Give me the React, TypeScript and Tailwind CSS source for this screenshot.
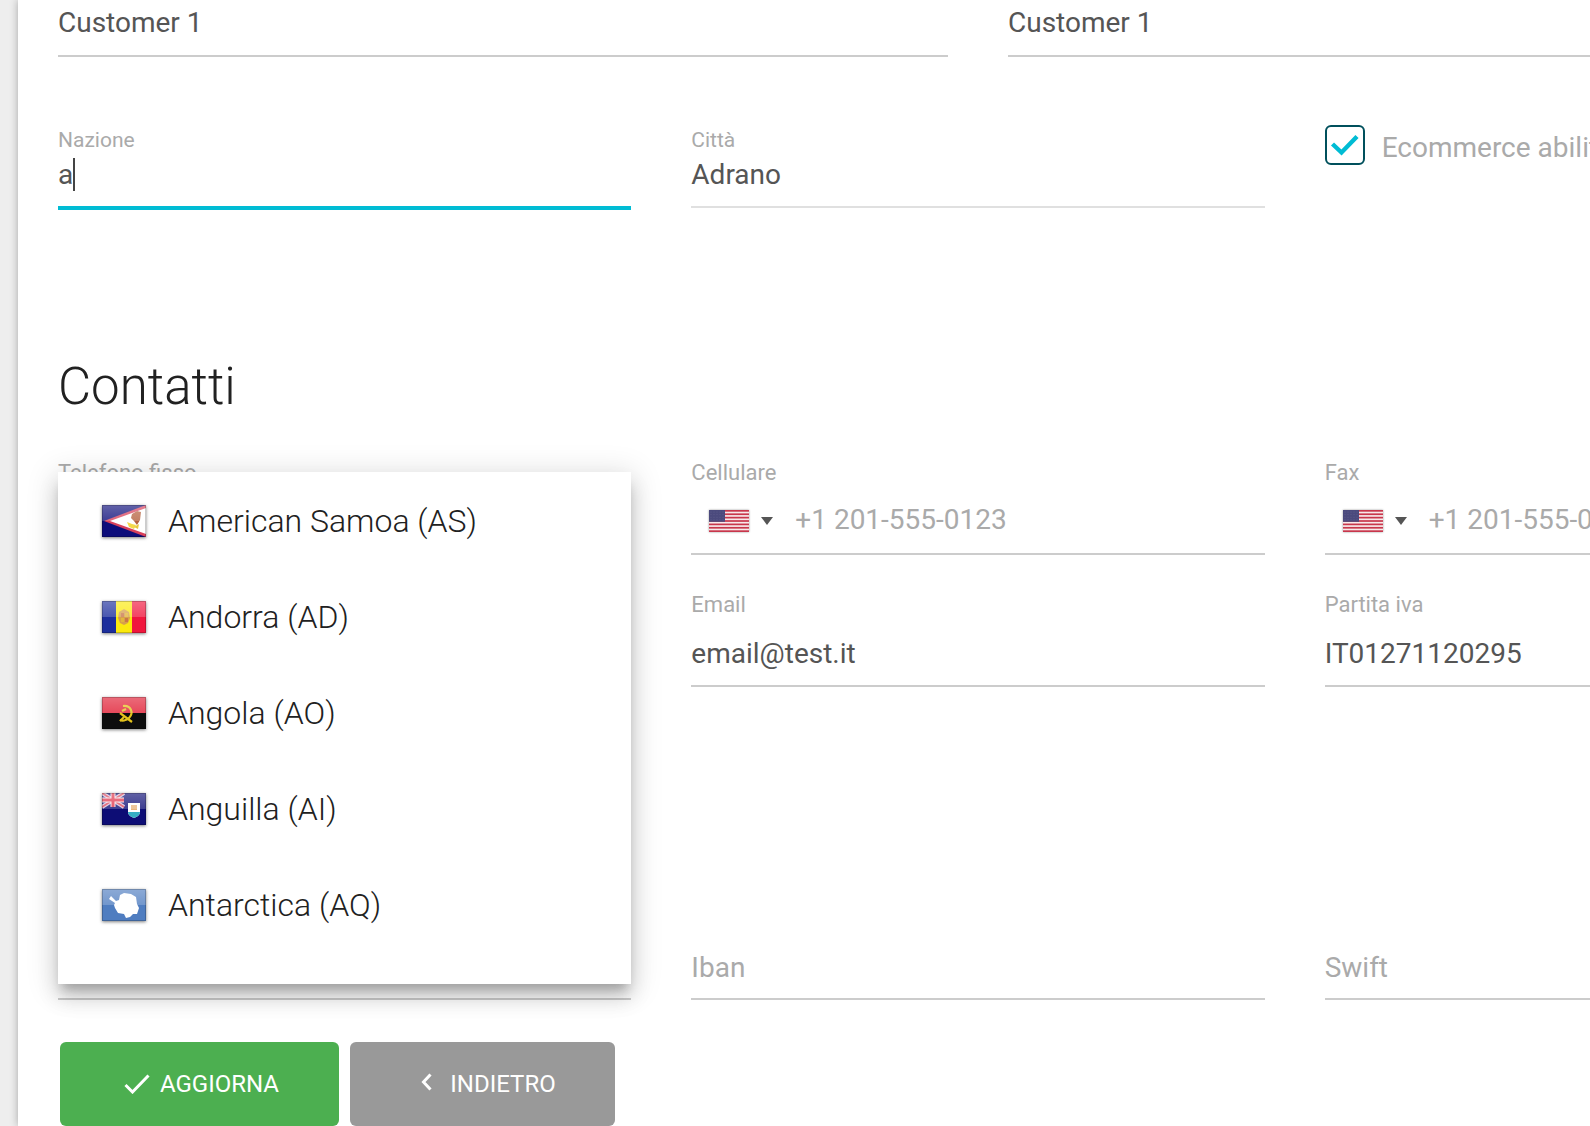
import React from 'react';

type Variant = 'plain' | 'compact' | 'floating' | 'empty';

interface FieldProps {
  id: string;
  variant: Variant;
  label?: string;
  value?: string;
  placeholder?: string;
}

const inputStyles: Record<Variant, string> = {
  plain: 'h-[57px] pb-[10px] border-[#ccc]',
  compact: 'h-14 pb-[10px] border-[#e0e0e0]',
  floating: 'h-[57px] pb-2 border-[#ccc]',
  empty: 'h-[57px] pb-[6px] border-[#ccc]'
};

const compactLabel = 'block text-[21px] leading-[23px] text-[#aaa]';
const floatingLabel = 'block text-[22px] leading-[23px] text-[#aaa] mb-[14px]';

function Field({ id, variant, label, value, placeholder }: FieldProps) {
  return (
    <div>
      {label && (
        <label htmlFor={id} className={variant === 'compact' ? compactLabel : floatingLabel}>
          {label}
        </label>
      )}
      <input
        id={id}
        type="text"
        defaultValue={value}
        placeholder={placeholder}
        aria-label={label ? undefined : placeholder || id}
        className={`block w-full border-b-2 bg-transparent text-[28px] text-[#555] placeholder-[#aaa] outline-none ${inputStyles[variant]}`}
      />
    </div>
  );
}

function UsFlag() {
  return (
    <svg className="w-10 h-[22px] shadow-[0_0_2px_#999]" viewBox="0 0 40 22" preserveAspectRatio="none">
      <rect width="40" height="22" fill="#f7e9ea" />
      {[0, 1, 2, 3, 4, 5, 6].map(i => (
        <rect key={i} y={i * 3.385} width="40" height="1.7" fill="#c8374c" />
      ))}
      <rect width="16" height="11.8" fill="#4b4a7d" />
      {[0, 1, 2, 3].map(row =>
        [0, 1, 2, 3, 4].map(col => (
          <circle key={`${row}-${col}`} cx={2 + col * 3} cy={2 + row * 2.6} r="0.4" fill="#7877a2" />
        ))
      )}
    </svg>
  );
}

function PhoneField({ id, label }: { id: string; label: string }) {
  return (
    <div>
      <label htmlFor={id} className={floatingLabel}>{label}</label>
      <div className="flex h-[57px] border-b-2 border-[#ccc] pb-3">
        <button type="button" aria-label="Prefisso" className="flex items-center gap-3 pl-[18px] pr-[22px] pt-[2px]">
          <UsFlag />
          <svg className="w-3 h-2" viewBox="0 0 12 8">
            <path d="M0 0h12L6 8z" fill="#555" />
          </svg>
        </button>
        <input
          id={id}
          type="tel"
          placeholder="+1 201-555-0123"
          className="min-w-0 flex-1 bg-transparent text-[28px] text-[#555] placeholder-[#aaa] outline-none"
        />
      </div>
    </div>
  );
}

function FlagArt({ code }: { code: string }) {
  switch (code) {
    case 'AS':
      return (
        <>
          <rect width="44" height="32" fill="#10107a" />
          <path d="M44 0v32L2 16z" fill="#d8405a" />
          <path d="M44 3v26L8 16z" fill="#fff" />
          <path d="M30 9l5-3 4 1-1 8-3 5-3-4-3-3z" fill="#b5603c" />
          <path d="M25 17l5 2 4 1-2 4-5-2z" fill="#f3d94a" />
          <path d="M32 22l5-3-1 5z" fill="#e8c83c" />
        </>
      );
    case 'AD':
      return (
        <>
          <rect width="15" height="32" fill="#1a2d9c" />
          <rect x="14" width="16" height="32" fill="#fbe90e" />
          <rect x="30" width="14" height="32" fill="#f0123c" />
          <path d="M17 11l5-3 5 3 1 6-2 5-4 2-4-2-2-5z" fill="#d6a04c" />
          <path d="M19 12h3v4h-3zM23 17h3v4h-3z" fill="#c9764a" />
          <path d="M23 12h3v4h-3zM19 17h3v4h-3z" fill="#e2b53e" />
        </>
      );
    case 'AO':
      return (
        <>
          <rect width="44" height="16" fill="#e01f30" />
          <rect y="16" width="44" height="16" fill="#0b0b0b" />
          <g fill="none" stroke="#e3c21c" strokeWidth="2.2">
            <path d="M21 9c8-1 11 7 6 12-3 3-7 3-9 2" />
            <path d="M18 16l12 9" />
            <path d="M20 14l4-2" />
            <path d="M18 24l4-4" />
          </g>
        </>
      );
    case 'AI':
      return (
        <>
          <rect width="44" height="32" fill="#0c0c74" />
          <path d="M0 0l22 14M22 0L0 14" stroke="#d9c3dc" strokeWidth="4" />
          <path d="M0 0l22 14M22 0L0 14" stroke="#dd4458" strokeWidth="1.6" />
          <path d="M11 0v14M0 7h22" stroke="#f6e6ea" strokeWidth="5" />
          <path d="M11 0v14M0 7h22" stroke="#e03048" strokeWidth="3" />
          <path d="M26 10h12v9c0 3-3 5-6 6-3-1-6-3-6-6z" fill="#fff" />
          <path d="M26 19h12c0 3-3 5-6 6-3-1-6-3-6-6z" fill="#35aec4" />
          <path d="M29 12h6v5h-6z" fill="#e9b67e" />
        </>
      );
    default:
      return (
        <>
          <rect width="44" height="32" fill="#4f7dc0" />
          <path
            d="M9 7L14 12L17 11L18 6L22 4L29 5L34 8L35 15L37 19L35 25L31 25L28 28L24 29L22 25L16 24L13 19L12 16L13 14L7 10Z"
            fill="#fff"
          />
        </>
      );
  }
}

function CountryFlag({ code }: { code: string }) {
  return (
    <svg className="w-11 h-8 shadow-[0_1px_3px_rgba(0,0,0,0.5)]" viewBox="0 0 44 32">
      <defs>
        <linearGradient id={`gloss-${code}`} x1="0" y1="0" x2="0" y2="1">
          <stop offset="0" stopColor="#fff" stopOpacity="0.35" />
          <stop offset="1" stopColor="#fff" stopOpacity="0.2" />
        </linearGradient>
        <filter id={`soft-${code}`} x="0" y="0" width="1" height="1">
          <feGaussianBlur stdDeviation="0.7" />
        </filter>
      </defs>
      <g filter={`url(#soft-${code})`}>
        <FlagArt code={code} />
      </g>
      <rect width="44" height="16" fill={`url(#gloss-${code})`} />
      <rect x="0.5" y="0.5" width="43" height="31" fill="none" stroke="#000" strokeOpacity="0.2" />
    </svg>
  );
}

const countries = [
  { name: 'American Samoa', code: 'AS' },
  { name: 'Andorra', code: 'AD' },
  { name: 'Angola', code: 'AO' },
  { name: 'Anguilla', code: 'AI' },
  { name: 'Antarctica', code: 'AQ' }
];

function CountryMenu() {
  return (
    <ul
      role="listbox"
      aria-label="Nazione"
      className="absolute inset-x-0 top-[11px] z-10 bg-white pb-8 shadow-[0_10px_10px_-4px_rgba(0,0,0,0.2),0_14px_20px_rgba(0,0,0,0.14),0_4px_28px_4px_rgba(0,0,0,0.12)]"
    >
      {countries.map(country => (
        <li
          key={country.code}
          role="option"
          aria-selected={false}
          className="flex h-24 items-center gap-[22px] pl-11 pt-[2px] text-[32px] font-light text-[#212121]"
        >
          <CountryFlag code={country.code} />
          <span>{country.name} ({country.code})</span>
        </li>
      ))}
    </ul>
  );
}

export default function App() {
  const [query, setQuery] = React.useState('a');
  const [ecommerce, setEcommerce] = React.useState(true);

  return (
    <div className="min-h-screen overflow-hidden bg-[#eee] pl-[18px] font-['Roboto',sans-serif]">
      <form className="min-h-screen w-[calc(100%+348px)] bg-white px-10 shadow-[0_0_8px_rgba(0,0,0,0.3)]">
        <div className="grid grid-cols-2 gap-[60px]">
          <Field id="nome" variant="plain" value="Customer 1" />
          <Field id="ragione-sociale" variant="plain" value="Customer 1" />
        </div>

        <div className="mt-[72px] grid grid-cols-3 gap-[60px]">
          <div>
            <label htmlFor="nazione" className={compactLabel}>Nazione</label>
            <div className="relative">
              <input
                id="nazione"
                type="text"
                value={query}
                onChange={e => setQuery(e.target.value)}
                className="block h-[58px] w-full border-b-4 border-[#00bcd4] bg-transparent pb-[10px] text-[28px] text-[#555] caret-transparent outline-none"
              />
              {/* Text cursor */}
              <span className="pointer-events-none absolute left-[15px] top-[6px] h-[33px] w-[2px] bg-[#444]" />
            </div>
          </div>
          <Field id="citta" variant="compact" label="Città" value="Adrano" />
          <label className="flex h-10 items-center gap-[17px] text-[28px] text-[#aaa] -mt-1">
            <span className="relative block size-10">
              <input
                type="checkbox"
                checked={ecommerce}
                onChange={e => setEcommerce(e.target.checked)}
                className="block size-10 appearance-none rounded-md border-2 border-[#00505c] bg-white"
              />
              {ecommerce && (
                <svg className="pointer-events-none absolute inset-0" viewBox="0 0 40 40" fill="none">
                  <path d="M7.5 19L16.5 27.5L32 11.5" stroke="#00bcd4" strokeWidth="4.4" />
                </svg>
              )}
            </span>
            <span className="whitespace-nowrap pt-[6px]">Ecommerce abilitato</span>
          </label>
        </div>

        <h2 className="mt-[147px] text-[51px] font-light leading-[60px] text-[#212121]">Contatti</h2>

        <div className="mt-11 grid grid-cols-3 gap-[60px]">
          <div className="relative">
            <PhoneField id="telefono" label="Telefono fisso" />
            <CountryMenu />
          </div>
          <PhoneField id="cellulare" label="Cellulare" />
          <PhoneField id="fax" label="Fax" />
        </div>

        <div className="mt-[38px] grid grid-cols-3 gap-[60px]">
          <div />
          <Field id="email" variant="floating" label="Email" value="email@test.it" />
          <Field id="partita-iva" variant="floating" label="Partita iva" value="IT01271120295" />
        </div>

        <div className="mt-64 grid grid-cols-3 gap-[60px]">
          <Field id="banca" variant="empty" />
          <Field id="iban" variant="empty" placeholder="Iban" />
          <Field id="swift" variant="empty" placeholder="Swift" />
        </div>

        <div className="mt-[42px] flex gap-[11px] pl-[2px] text-2xl text-white">
          <button type="submit" className="flex h-[84px] w-[279px] items-center justify-center gap-[10px] rounded-md bg-[#4caf50] pl-1">
            <svg className="h-5 w-[26px]" viewBox="0 0 26 20" fill="none">
              <path d="M1.5 11L8.5 18L24.5 1.5" stroke="#fff" strokeWidth="3" />
            </svg>
            AGGIORNA
          </button>
          <button type="button" className="flex h-[84px] w-[265px] items-center justify-center gap-[18px] rounded-md bg-[#999] pl-3">
            <svg className="mb-1 h-[18px] w-[11px]" viewBox="0 0 11 18" fill="none">
              <path d="M9.5 1.5L2.5 9L9.5 16.5" stroke="#fff" strokeWidth="3" />
            </svg>
            INDIETRO
          </button>
        </div>
      </form>
    </div>
  );
}
